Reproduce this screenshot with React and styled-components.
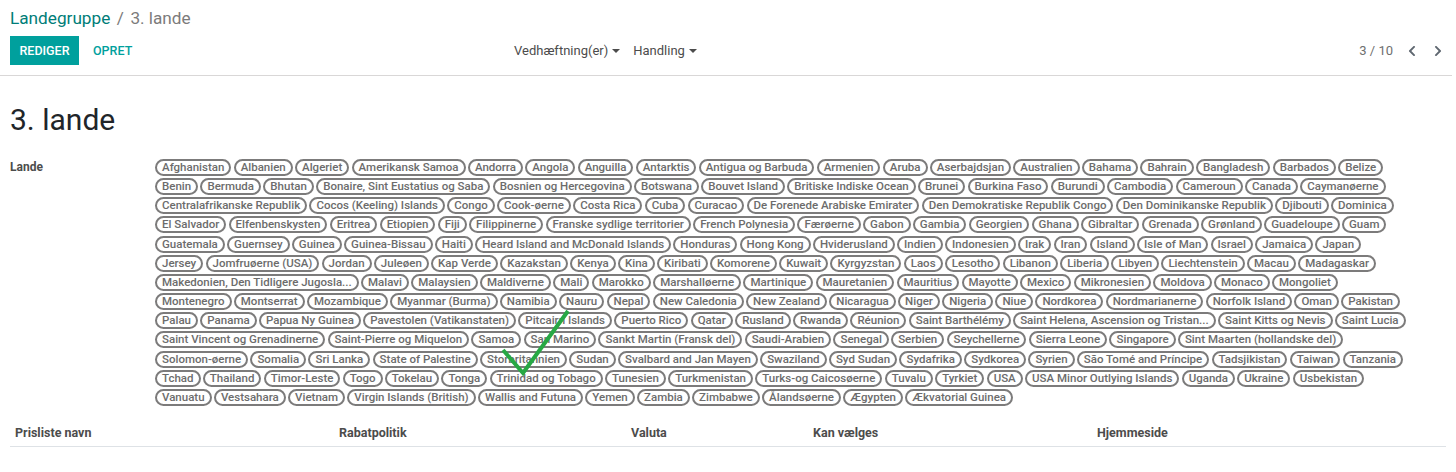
import styled, { createGlobalStyle } from "styled-components";
import { FaChevronLeft, FaChevronRight } from "react-icons/fa";

const countries = [
  "Afghanistan", "Albanien", "Algeriet", "Amerikansk Samoa", "Andorra", "Angola", "Anguilla", "Antarktis", "Antigua og Barbuda", "Armenien", "Aruba", "Aserbajdsjan", "Australien", "Bahama", "Bahrain", "Bangladesh", "Barbados", "Belize",
  "Benin", "Bermuda", "Bhutan", "Bonaire, Sint Eustatius og Saba", "Bosnien og Hercegovina", "Botswana", "Bouvet Island", "Britiske Indiske Ocean", "Brunei", "Burkina Faso", "Burundi", "Cambodia", "Cameroun", "Canada", "Caymanøerne",
  "Centralafrikanske Republik", "Cocos (Keeling) Islands", "Congo", "Cook-øerne", "Costa Rica", "Cuba", "Curacao", "De Forenede Arabiske Emirater", "Den Demokratiske Republik Congo", "Den Dominikanske Republik", "Djibouti", "Dominica",
  "El Salvador", "Elfenbenskysten", "Eritrea", "Etiopien", "Fiji", "Filippinerne", "Franske sydlige territorier", "French Polynesia", "Færøerne", "Gabon", "Gambia", "Georgien", "Ghana", "Gibraltar", "Grenada", "Grønland", "Guadeloupe", "Guam",
  "Guatemala", "Guernsey", "Guinea", "Guinea-Bissau", "Haiti", "Heard Island and McDonald Islands", "Honduras", "Hong Kong", "Hviderusland", "Indien", "Indonesien", "Irak", "Iran", "Island", "Isle of Man", "Israel", "Jamaica", "Japan",
  "Jersey", "Jomfruøerne (USA)", "Jordan", "Juleøen", "Kap Verde", "Kazakstan", "Kenya", "Kina", "Kiribati", "Komorene", "Kuwait", "Kyrgyzstan", "Laos", "Lesotho", "Libanon", "Liberia", "Libyen", "Liechtenstein", "Macau", "Madagaskar",
  "Makedonien, Den Tidligere Jugosla...", "Malavi", "Malaysien", "Maldiverne", "Mali", "Marokko", "Marshalløerne", "Martinique", "Mauretanien", "Mauritius", "Mayotte", "Mexico", "Mikronesien", "Moldova", "Monaco", "Mongoliet",
  "Montenegro", "Montserrat", "Mozambique", "Myanmar (Burma)", "Namibia", "Nauru", "Nepal", "New Caledonia", "New Zealand", "Nicaragua", "Niger", "Nigeria", "Niue", "Nordkorea", "Nordmarianerne", "Norfolk Island", "Oman", "Pakistan",
  "Palau", "Panama", "Papua Ny Guinea", "Pavestolen (Vatikanstaten)", "Pitcairn Islands", "Puerto Rico", "Qatar", "Rusland", "Rwanda", "Réunion", "Saint Barthélémy", "Saint Helena, Ascension og Tristan...", "Saint Kitts og Nevis", "Saint Lucia",
  "Saint Vincent og Grenadinerne", "Saint-Pierre og Miquelon", "Samoa", "San Marino", "Sankt Martin (Fransk del)", "Saudi-Arabien", "Senegal", "Serbien", "Seychellerne", "Sierra Leone", "Singapore", "Sint Maarten (hollandske del)",
  "Solomon-øerne", "Somalia", "Sri Lanka", "State of Palestine", "Storbritannien", "Sudan", "Svalbard and Jan Mayen", "Swaziland", "Syd Sudan", "Sydafrika", "Sydkorea", "Syrien", "São Tomé and Príncipe", "Tadsjikistan", "Taiwan", "Tanzania",
  "Tchad", "Thailand", "Timor-Leste", "Togo", "Tokelau", "Tonga", "Trinidad og Tobago", "Tunesien", "Turkmenistan", "Turks-og Caicosøerne", "Tuvalu", "Tyrkiet", "USA", "USA Minor Outlying Islands", "Uganda", "Ukraine", "Usbekistan",
  "Vanuatu", "Vestsahara", "Vietnam", "Virgin Islands (British)", "Wallis and Futuna", "Yemen", "Zambia", "Zimbabwe", "Ålandsøerne", "Ægypten", "Ækvatorial Guinea",
];

const columns = [
  { label: "Prisliste navn", width: 324 },
  { label: "Rabatpolitik", width: 292 },
  { label: "Valuta", width: 182 },
  { label: "Kan vælges", width: 284 },
  { label: "Hjemmeside", width: 354 },
];

export default function App() {
  return (
    <>
      <GlobalStyle />
      <ControlPanel>
        <Breadcrumb>
          <a>Landegruppe</a>
          <Divider>/</Divider>
          <span>3. lande</span>
        </Breadcrumb>
        <Toolbar>
          <Buttons>
            <PrimaryButton>REDIGER</PrimaryButton>
            <LinkButton>OPRET</LinkButton>
          </Buttons>
          <Menus>
            <Menu>Vedhæftning(er)<Caret /></Menu>
            <Menu>Handling<Caret /></Menu>
          </Menus>
          <Pager>
            <span>3 / 10</span>
            <PagerIcons>
              <FaChevronLeft />
              <FaChevronRight />
            </PagerIcons>
          </Pager>
        </Toolbar>
      </ControlPanel>
      <Sheet>
        <Title>3. lande</Title>
        <Field>
          <FieldLabel>Lande</FieldLabel>
          <Tags>
            {countries.map(name => <Tag key={name}>{name}</Tag>)}
            <Check viewBox="0 0 70 68">
              <path d="M2 41 L22 64 L67 2" />
            </Check>
          </Tags>
        </Field>
        <Table>
          <thead>
            <tr>
              {columns.map(c => <Th key={c.label} $width={c.width}>{c.label}</Th>)}
            </tr>
          </thead>
        </Table>
      </Sheet>
    </>
  );
};

const GlobalStyle = createGlobalStyle`
  body {
    margin: 0;
    background: #fff;
    font-family: Roboto, "Liberation Sans", sans-serif;
    font-size: 12px;
    color: #4c4c4c;
  }
`;

const ControlPanel = styled.div`
  box-sizing: border-box;
  height: 76px;
  width: 1452px;
  padding: 6px 8px 0 10px;
  border-bottom: 1px solid #d9d7d7;
`;

const Breadcrumb = styled.div`
  height: 24px;
  line-height: 24px;
  font-size: 17.2px;
  color: #7c7b7b;
  a {
    color: #007d78;
  }
`;

const Divider = styled.span`
  margin: 0 6.5px;
`;

const Toolbar = styled.div`
  display: grid;
  grid-template-columns: 504px 1fr auto;
  align-items: center;
  margin-top: 6px;
  height: 29px;
`;

const Buttons = styled.div`
  display: flex;
  align-items: center;
`;

const PrimaryButton = styled.button`
  height: 29px;
  width: 69px;
  padding: 0;
  border: 0;
  background: #00a09d;
  color: #fff;
  font: 500 12.5px Roboto, sans-serif;
`;

const LinkButton = styled.button`
  height: 29px;
  margin-left: 14px;
  padding: 0;
  border: 0;
  background: none;
  color: #00a09d;
  font: 500 12.5px Roboto, sans-serif;
`;

const Menus = styled.div`
  display: flex;
  align-items: center;
  gap: 13px;
`;

const Menu = styled.div`
  display: flex;
  align-items: center;
  font-size: 13px;
  color: #4c4c4c;
`;

const Caret = styled.i`
  margin-left: 4px;
  border-top: 4px solid #4c4c4c;
  border-left: 4px solid transparent;
  border-right: 4px solid transparent;
`;

const Pager = styled.div`
  display: flex;
  justify-content: flex-end;
  align-items: center;
  color: #6f6f6f;
  font-size: 13px;
`;

const PagerIcons = styled.div`
  display: flex;
  gap: 14px;
  margin-left: 13px;
  color: #5f6770;
  font-size: 12px;
  svg {
    display: block;
  }
`;

const Sheet = styled.div`
  padding: 0 10px;
`;

const Title = styled.h1`
  margin: 26px 0 21px;
  height: 36px;
  line-height: 36px;
  font-size: 30px;
  font-weight: 400;
  color: #212529;
`;

const Field = styled.div`
  display: flex;
  align-items: flex-start;
`;

const FieldLabel = styled.div`
  width: 145px;
  flex: none;
  font-weight: 700;
  font-size: 12px;
  line-height: 17px;
  color: #4c4c4c;
`;

const Tags = styled.div`
  position: relative;
  display: flex;
  flex-wrap: wrap;
  gap: 2.17px 2.3px;
  width: 1256px;
`;

const Tag = styled.span`
  box-sizing: border-box;
  height: 17px;
  line-height: 13px;
  padding: 0 5px;
  border: 2px solid #7c7b7b;
  border-radius: 9px;
  font-size: 11.5px;
  font-weight: 500;
  color: #6c6c6c;
  white-space: nowrap;
`;

const Check = styled.svg`
  position: absolute;
  left: 346px;
  top: 150px;
  width: 70px;
  height: 68px;
  fill: none;
  stroke: #27a844;
  stroke-width: 4;
`;

const Table = styled.table`
  width: 1436px;
  margin-top: 13px;
  border-collapse: collapse;
  table-layout: fixed;
`;

const Th = styled.th`
  width: ${props => props.$width}px;
  box-sizing: border-box;
  height: 28px;
  padding: 0 5px;
  text-align: left;
  font-size: 12.5px;
  font-weight: 700;
  color: #4c4c4c;
  border-bottom: 1px solid #dee2e6;
`;
